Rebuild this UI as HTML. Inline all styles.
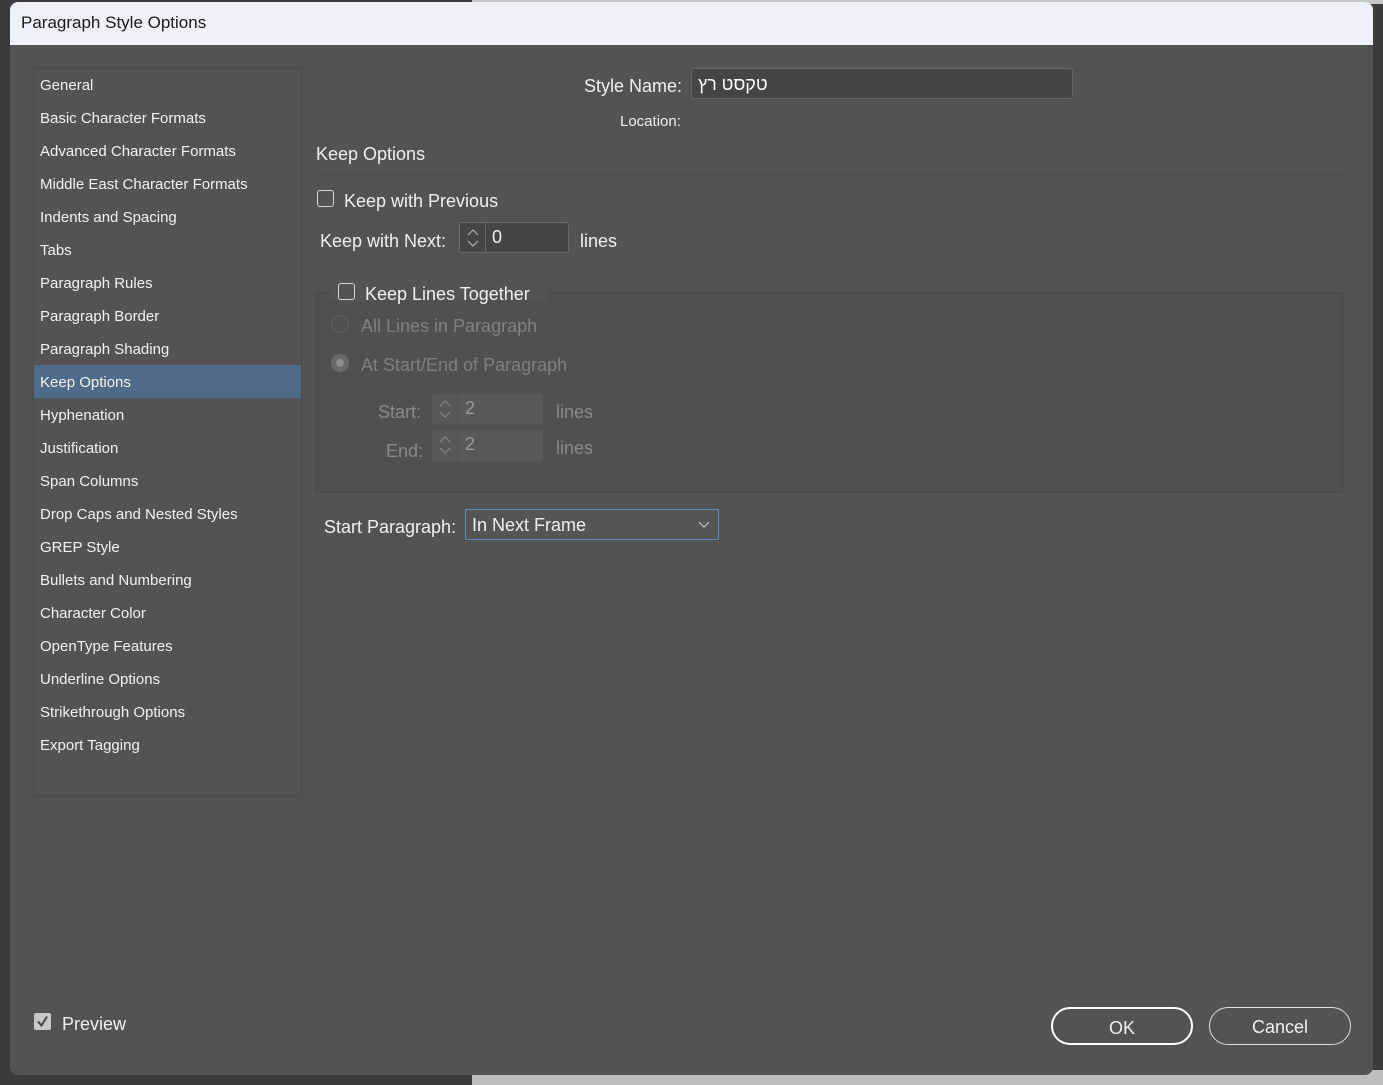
<!DOCTYPE html>
<html><head><meta charset="utf-8"><style>
*{box-sizing:border-box;margin:0;padding:0}
body{width:1383px;height:1085px;background:#3c3c3c;position:relative;overflow:hidden;font-family:"Liberation Sans","DejaVu Sans","Noto Sans CJK SC",sans-serif;color:#f0f0f0}
.bg2{position:absolute;left:472px;top:1070px;width:911px;height:15px;background:#bdbdbd}
.bg3{position:absolute;left:472px;top:0;width:911px;height:4px;background:#c8c8c8}
.dlg{position:absolute;left:10px;top:2px;width:1363px;height:1073px;background:#535353;border-radius:8px;overflow:hidden}
.title{height:43px;background:#eef2f8;color:#1a1a1a;font-size:17px;padding:11px 0 0 11px}
.abs{position:absolute;white-space:nowrap}
.list{position:absolute;left:23px;top:65px;width:269px;height:729px;border:1px solid #4a4a4a}
.it{position:absolute;left:0;width:267px;height:33px;font-size:15px;padding:9px 0 0 6px;color:#f2f2f2}
.sel{background:#4f6b88}
.f{font-size:18px;margin-top:2px}
.cb{position:absolute;width:17px;height:17px;border:1.5px solid #d8d8d8;border-radius:3px}
.inp{position:absolute;background:#454545;border:1px solid #6a6a6a;border-radius:3px}
.btn{position:absolute;height:38px;border-radius:19px;font-size:18px;text-align:center;padding-top:9px}
</style></head><body>
<div class="bg3"></div><div class="bg2"></div>
<div class="dlg">
<div class="title">Paragraph Style Options</div>
<div class="list">
<div class="it" style="top:0px">General</div>
<div class="it" style="top:33px">Basic Character Formats</div>
<div class="it" style="top:66px">Advanced Character Formats</div>
<div class="it" style="top:99px">Middle East Character Formats</div>
<div class="it" style="top:132px">Indents and Spacing</div>
<div class="it" style="top:165px">Tabs</div>
<div class="it" style="top:198px">Paragraph Rules</div>
<div class="it" style="top:231px">Paragraph Border</div>
<div class="it" style="top:264px">Paragraph Shading</div>
<div class="it sel" style="top:297px">Keep Options</div>
<div class="it" style="top:330px">Hyphenation</div>
<div class="it" style="top:363px">Justification</div>
<div class="it" style="top:396px">Span Columns</div>
<div class="it" style="top:429px">Drop Caps and Nested Styles</div>
<div class="it" style="top:462px">GREP Style</div>
<div class="it" style="top:495px">Bullets and Numbering</div>
<div class="it" style="top:528px">Character Color</div>
<div class="it" style="top:561px">OpenType Features</div>
<div class="it" style="top:594px">Underline Options</div>
<div class="it" style="top:627px">Strikethrough Options</div>
<div class="it" style="top:660px">Export Tagging</div>
</div>
<div class="abs f" style="left:574px;top:72px">Style Name:</div>
<div class="inp" style="left:681px;top:66px;width:382px;height:31px;border-color:#666"><span class="abs f" style="left:6px;top:3px;color:#fff">טקסט רץ</span></div>
<div class="abs" style="left:610px;top:111px;font-size:15px">Location:</div>
<div class="abs f" style="left:306px;top:140px">Keep Options</div>
<div class="abs" style="left:306px;top:172px;width:1028px;height:1px;background:#4a4a4a"></div>
<div class="cb" style="left:307px;top:188px"></div>
<div class="abs f" style="left:334px;top:187px">Keep with Previous</div>
<div class="abs f" style="left:310px;top:227px">Keep with Next:</div>
<div class="inp" style="left:449px;top:220px;width:110px;height:31px"><div class="abs" style="left:25px;top:0;width:1px;height:29px;background:#6a6a6a"></div><svg class="abs" style="left:6px;top:5px" width="14" height="20"><path d="M2 7 L7 2 L12 7 M2 13 L7 18 L12 13" fill="none" stroke="#bbb" stroke-width="1"/></svg><span class="abs f" style="left:32px;top:2px">0</span></div>
<div class="abs f" style="left:570px;top:227px">lines</div>
<div class="abs" style="left:305px;top:290px;width:1028px;height:201px;border:1px solid #474747;border-radius:3px;background:#505050"></div>
<div class="abs" style="left:320px;top:283px;width:218px;height:16px;background:#535353"></div>
<div class="cb" style="left:328px;top:281px"></div>
<div class="abs f" style="left:355px;top:280px">Keep Lines Together</div>
<div class="abs" style="left:321px;top:313px;width:18px;height:18px;border:1.5px solid #626262;border-radius:50%"></div>
<div class="abs f" style="left:351px;top:312px;color:#7f7f7f">All Lines in Paragraph</div>
<div class="abs" style="left:321px;top:352px;width:18px;height:18px;background:#6a6a6a;border-radius:50%"><div class="abs" style="left:5px;top:5px;width:8px;height:8px;background:#8d8d8d;border-radius:50%"></div></div>
<div class="abs f" style="left:351px;top:351px;color:#7f7f7f">At Start/End of Paragraph</div>
<div class="abs f" style="left:368px;top:398px;color:#8a8a8a">Start:</div>
<div class="abs" style="left:422px;top:392px;width:111px;height:31px;background:#585858;border-radius:2px"><svg class="abs" style="left:6px;top:5px" width="14" height="20"><path d="M2 7 L7 2 L12 7 M2 13 L7 18 L12 13" fill="none" stroke="#8a8a8a" stroke-width="1"/></svg><div class="abs" style="left:25px;top:0;width:1px;height:31px;background:#4f4f4f"></div><span class="abs f" style="left:33px;top:2px;color:#9a9a9a">2</span></div>
<div class="abs f" style="left:546px;top:398px;color:#8a8a8a">lines</div>
<div class="abs f" style="left:376px;top:437px;color:#8a8a8a">End:</div>
<div class="abs" style="left:422px;top:428px;width:111px;height:31px;background:#585858;border-radius:2px"><svg class="abs" style="left:6px;top:5px" width="14" height="20"><path d="M2 7 L7 2 L12 7 M2 13 L7 18 L12 13" fill="none" stroke="#8a8a8a" stroke-width="1"/></svg><div class="abs" style="left:25px;top:0;width:1px;height:31px;background:#4f4f4f"></div><span class="abs f" style="left:33px;top:2px;color:#9a9a9a">2</span></div>
<div class="abs f" style="left:546px;top:434px;color:#8a8a8a">lines</div>
<div class="abs f" style="left:314px;top:513px">Start Paragraph:</div>
<div class="abs" style="left:455px;top:507px;width:254px;height:31px;border:1px solid #5b8ec7;border-radius:2px;background:#555"><span class="abs f" style="left:6px;top:3px">In Next Frame</span><svg class="abs" style="left:232px;top:11px" width="12" height="8"><path d="M1 1 L6 6 L11 1" fill="none" stroke="#ccc" stroke-width="1"/></svg></div>
<div class="abs" style="left:24px;top:1011px;width:17px;height:17px;background:#c8c8c8;border-radius:2px"><svg width="17" height="17"><path d="M4 8.5 L7.5 12.5 L13 3.5" fill="none" stroke="#444" stroke-width="2"/></svg></div>
<div class="abs f" style="left:52px;top:1010px">Preview</div>
<div class="btn" style="left:1041px;top:1005px;width:142px;border:2.5px solid #fff">OK</div>
<div class="btn" style="left:1199px;top:1005px;width:142px;border:1px solid #ddd">Cancel</div>
</div>
</body></html>
